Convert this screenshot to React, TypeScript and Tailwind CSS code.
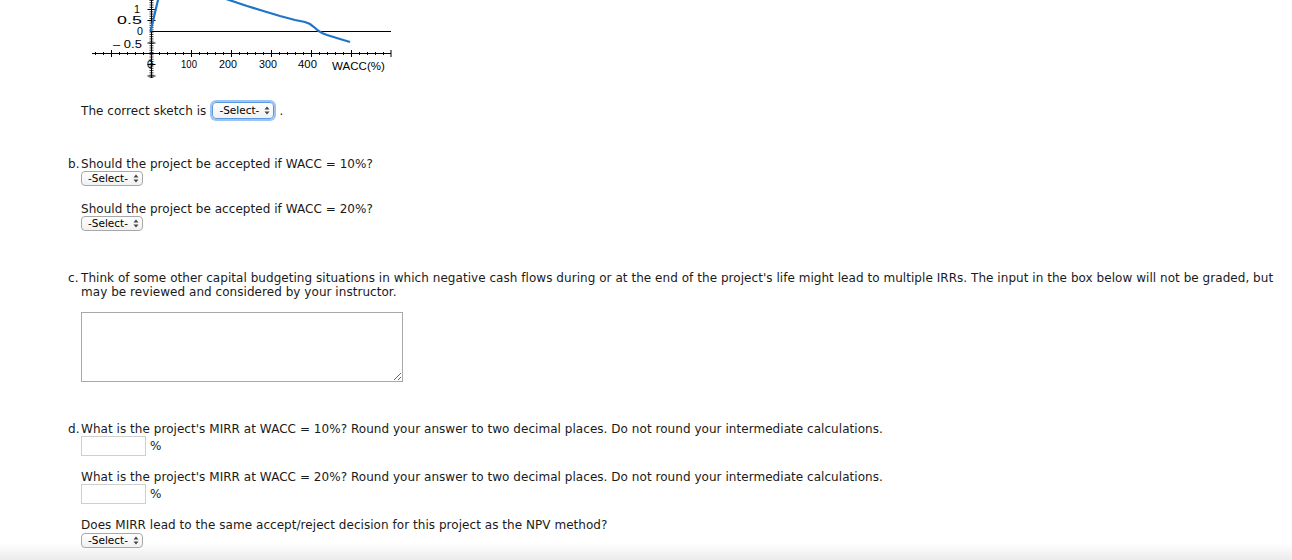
import React from "react";

const Arrows = () => (
  <svg width="6" height="9" viewBox="0 0 6 9" className="ml-[5px] shrink-0">
    <path d="M3 0.5 L5.5 3.5 H0.5 Z" fill="#444" />
    <path d="M3 8.5 L5.5 5.5 H0.5 Z" fill="#444" />
  </svg>
);

const Select = ({ focused = false }: { focused?: boolean }) => (
  <div
    className={
      focused
        ? "flex h-[17px] w-[62px] items-center whitespace-nowrap rounded-[4px] border border-[#5a9ae0] bg-linear-to-b from-white to-[#f1f1f1] pl-[6px] text-[10.5px] leading-none tracking-normal text-black shadow-[0_0_0_2px_#9cc3f2]"
        : "flex h-[15px] w-[62px] items-center whitespace-nowrap rounded-[4px] border border-[#a8a8a8] bg-linear-to-b from-white to-[#f1f1f1] pl-[6px] text-[10.5px] leading-none tracking-normal text-black"
    }
  >
    <span>-Select-</span>
    <Arrows />
  </div>
);

const PctInput = () => (
  <div className="flex items-center">
    <div className="h-[20px] w-[65px] border border-[#cfcfcf] bg-white" />
    <span className="ml-[4px]">%</span>
  </div>
);

const Chart = () => {
  const xMinor: number[] = [];
  for (let x = 95.5; x <= 391; x += 8) xMinor.push(x);
  const xMajor = [111.5, 191.5, 231.5, 271.5, 311.5, 351.5, 391];
  const yMinor: number[] = [];
  for (let y = 0.5; y <= 78; y += 2.26) yMinor.push(y);
  const yMajor = [9.5, 20.5, 43, 64.5, 76];
  const curve =
    "226,-1 229,0 247,6 265,11.5 280,16 295,20 305,22 310,24 314,27 318,30.5 322,33 327,35 340,39 350,42";
  const labels: [string, number, number, number][] = [
    ["1", 134, 12.5, 6],
    ["0.5", 117, 24, 25],
    ["0", 137, 35, 6],
    ["– 0.5", 113, 47.5, 29],
    ["0", 147, 68, 6],
    ["100", 181, 68, 16],
    ["200", 219, 68, 18],
    ["300", 259, 68, 18],
    ["400", 298, 68, 19],
    ["WACC(%)", 332, 70, 53],
  ];
  return (
    <svg width="410" height="80" className="block" fontFamily="'Liberation Sans', Arial, sans-serif" fontSize="10.5">
      <line x1="92" y1="53.5" x2="391" y2="53.5" stroke="#000" />
      {xMinor.map((x) => (
        <line key={"xm" + x} x1={x} y1="52" x2={x} y2="55" stroke="#000" />
      ))}
      {xMajor.map((x) => (
        <line key={"xM" + x} x1={x} y1="50" x2={x} y2="57" stroke="#000" />
      ))}
      <line x1="151.5" y1="0" x2="151.5" y2="78" stroke="#000" />
      {yMinor.map((y) => (
        <line key={"ym" + y} x1="149.5" y1={y} x2="153.5" y2={y} stroke="#000" strokeWidth="0.8" />
      ))}
      {yMajor.map((y) => (
        <line key={"yM" + y} x1="147.5" y1={y} x2="155.5" y2={y} stroke="#000" />
      ))}
      <line x1="150" y1="31.5" x2="391" y2="31.5" stroke="#000" />
      {labels.map(([t, x, y, w], i) => (
        <text key={i} x={x} y={y} textLength={w} lengthAdjust="spacingAndGlyphs">
          {t}
        </text>
      ))}
      <polyline points="150.5,31.5 158,0 159,-4" fill="none" stroke="#1f74c8" strokeWidth="2.2" />
      <polyline points={curve} fill="none" stroke="#1f74c8" strokeWidth="2.2" />
    </svg>
  );
};

const Label = ({ children }: { children: React.ReactNode }) => (
  <span className="w-[13px] shrink-0">{children}</span>
);

export default function App() {
  return (
    <div className="h-[560px] overflow-hidden bg-linear-to-b from-white from-[97%] to-[#ebebeb] font-['DejaVu_Sans',Verdana,sans-serif] text-[12px] leading-[14px] tracking-[0.045px] text-[#1a1a1a]">
      <Chart />

      {/* part a */}
      <div className="ml-[81px] mt-[22px] flex items-center">
        <span>The correct sketch is</span>
        <span className="ml-[6px]">
          <Select focused />
        </span>
        <span className="ml-[5px]">.</span>
      </div>

      {/* part b */}
      <div className="ml-[68px] mt-[38px] flex">
        <Label>b.</Label>
        <div>
          <div>Should the project be accepted if WACC = 10%?</div>
          <Select />
          <div className="mt-[16px]">Should the project be accepted if WACC = 20%?</div>
          <Select />
        </div>
      </div>

      {/* part c */}
      <div className="ml-[68px] mt-[40px] flex">
        <Label>c.</Label>
        <div>
          <p className="w-[1200px]">
            Think of some other capital budgeting situations in which negative cash flows during or at the end of the project's life might lead to multiple IRRs. The input in the box below will not be graded, but may be reviewed and considered by your instructor.
          </p>
          <textarea className="mt-[13px] block h-[70px] w-[322px] border border-[#a9a9a9] bg-white" />
        </div>
      </div>

      {/* part d */}
      <div className="ml-[68px] mt-[40px] flex">
        <Label>d.</Label>
        <div>
          <div>What is the project's MIRR at WACC = 10%? Round your answer to two decimal places. Do not round your intermediate calculations.</div>
          <PctInput />
          <div className="mt-[14px]">What is the project's MIRR at WACC = 20%? Round your answer to two decimal places. Do not round your intermediate calculations.</div>
          <PctInput />
          <div className="mt-[14px]">Does MIRR lead to the same accept/reject decision for this project as the NPV method?</div>
          <div className="mt-px">
            <Select />
          </div>
        </div>
      </div>
    </div>
  );
}
